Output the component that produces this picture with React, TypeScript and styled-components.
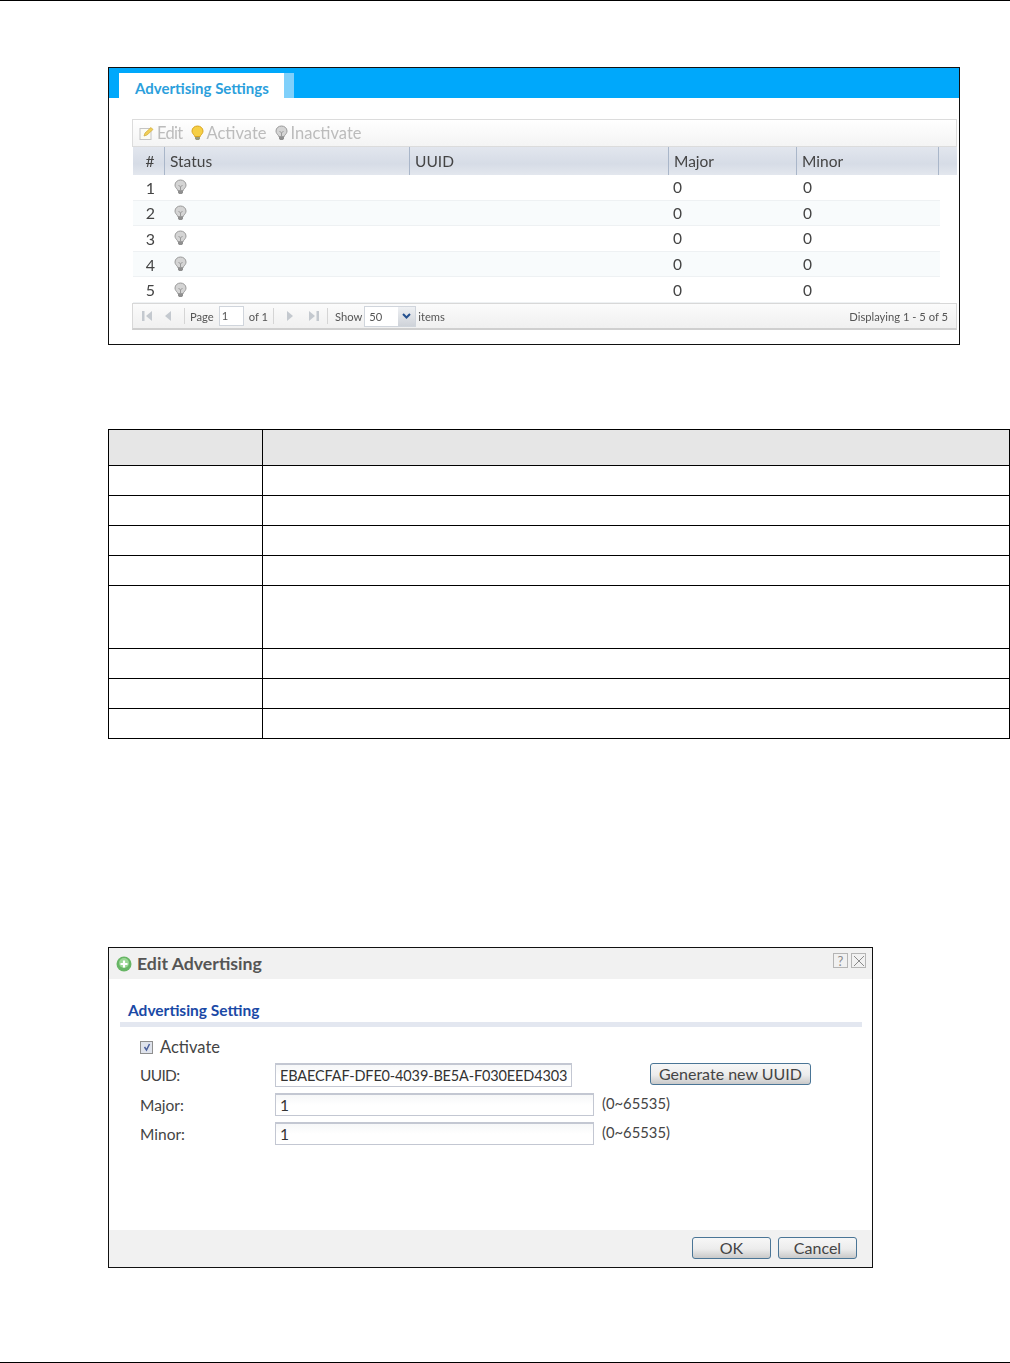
import React from "react";
import styled, { createGlobalStyle } from "styled-components";

const GlobalStyle = createGlobalStyle`
  html, body { margin: 0; padding: 0; background: #fff; }
  body { font-family: "Lato", "Liberation Sans", sans-serif; color: #444; }
`;

// shared template for the five table columns
const columns = "32px 245px 259px 128px 142px 17px";

const descriptionRows = [30, 30, 30, 30, 63, 30, 30, 30];

function Bulb({ on }: { on?: boolean }) {
  const fill = on ? "#f6cf45" : "#d4d4d4";
  const stroke = on ? "#d9a520" : "#9a9a9a";
  return (
    <svg width="13" height="16" viewBox="0 0 13 16">
      <path
        d="M6.5 1C3.4 1 1 3.2 1 6c0 1.9 1.1 3 2 4 .5.6.7 1 .7 1.5h5.6c0-.5.2-.9.7-1.5.9-1 2-2.1 2-4 0-2.8-2.4-5-5.5-5z"
        fill={fill}
        stroke={stroke}
      />
      <path d="M4 12h5v1.5l-1 1.5H5l-1-1.5z" fill={on ? "#9b9b7a" : "#8f8f8f"} />
      {!on && <path d="M4.5 6l2 2 2-2M6.5 8v3" fill="none" stroke="#9a9a9a" />}
    </svg>
  );
}

function EditIcon() {
  return (
    <svg width="15" height="15" viewBox="0 0 15 15">
      <rect x="1" y="2.5" width="11" height="11" fill="#fbfbf4" stroke="#c4c4c4" />
      <path d="M5 10l1-3 6-5.5 2 2L8 9z" fill="#f2cf55" stroke="#cda93a" strokeWidth=".7" />
    </svg>
  );
}

function PagerIcon({ kind }: { kind: "first" | "prev" | "next" | "last" }) {
  const shapes = {
    first: (
      <>
        <rect x="1" y="2" width="2.5" height="10" fill="#c4c9cf" />
        <path d="M11 2v10L5 7z" fill="#c4c9cf" />
      </>
    ),
    prev: <path d="M8 2v10L2 7z" fill="#c4c9cf" />,
    next: <path d="M2 2v10l6-5z" fill="#c4c9cf" />,
    last: (
      <>
        <path d="M1 2v10l6-5z" fill="#c4c9cf" />
        <rect x="8.5" y="2" width="2.5" height="10" fill="#c4c9cf" />
      </>
    ),
  };
  const width = kind === "first" || kind === "last" ? 12 : 9;
  return (
    <svg width={width} height="14" viewBox={`0 0 ${width} 14`}>
      {shapes[kind]}
    </svg>
  );
}

export default function App() {
  const rows = [1, 2, 3, 4, 5];
  return (
    <Page>
      <GlobalStyle />
      <SettingsPanel>
        <TabBand>
          <Tab>Advertising Settings</Tab>
          <TabEdge />
        </TabBand>
        <GridBox>
          <Toolbar>
            <ToolItem $spacing={-0.7}>
              <EditIcon />
              Edit
            </ToolItem>
            <ToolItem>
              <Bulb on />
              Activate
            </ToolItem>
            <ToolItem>
              <Bulb />
              Inactivate
            </ToolItem>
          </Toolbar>
          <HeaderRow>
            <HeaderCell $center>#</HeaderCell>
            <HeaderCell>Status</HeaderCell>
            <HeaderCell>UUID</HeaderCell>
            <HeaderCell>Major</HeaderCell>
            <HeaderCell>Minor</HeaderCell>
            <span />
          </HeaderRow>
          {rows.map((n) => (
            <DataRow key={n} $striped={n % 2 === 0}>
              <NumberCell>{n}</NumberCell>
              <BulbCell>
                <Bulb />
              </BulbCell>
              <span />
              <ValueCell $pad={4}>0</ValueCell>
              <ValueCell $pad={6}>0</ValueCell>
            </DataRow>
          ))}
          <Pager>
            <PagerLeft>
              <PagerButton $width={20}>
                <PagerIcon kind="first" />
              </PagerButton>
              <PagerButton $width={14}>
                <PagerIcon kind="prev" />
              </PagerButton>
              <PagerSep $left={7} />
              <span>Page</span>
              <PageInput>1</PageInput>
              <span>of 1</span>
              <PagerSep />
              <PagerButton $width={15}>
                <PagerIcon kind="next" />
              </PagerButton>
              <PagerButton $width={21}>
                <PagerIcon kind="last" />
              </PagerButton>
              <PagerSep $left={2} $right={2} />
              <span>Show</span>
              <SizeSelect>
                <SizeValue>50</SizeValue>
                <SizeArrow>
                  <svg width="9" height="6" viewBox="0 0 9 6">
                    <path d="M1 1l3.5 3.5L8 1" fill="none" stroke="#24508f" strokeWidth="2" />
                  </svg>
                </SizeArrow>
              </SizeSelect>
              <ItemsLabel>items</ItemsLabel>
            </PagerLeft>
            <span>Displaying 1 - 5 of 5</span>
          </Pager>
        </GridBox>
      </SettingsPanel>

      <DescriptionTable>
        <DescriptionHead />
        {descriptionRows.map((height, i) => (
          <DescriptionRow key={i} $height={height} />
        ))}
      </DescriptionTable>

      <Dialog>
        <DialogTitle>
          <TitleGroup>
            <svg width="16" height="16" viewBox="0 0 16 16">
              <circle cx="8" cy="8" r="7.5" fill="#67b565" />
              <circle cx="8" cy="7" r="5" fill="#9ad795" />
              <path d="M8 4.5v7M4.5 8h7" stroke="#fff" strokeWidth="2.2" />
            </svg>
            Edit Advertising
          </TitleGroup>
          <TitleButtons>
            <TitleButton>?</TitleButton>
            <TitleButton>
              <svg width="12" height="12" viewBox="0 0 12 12">
                <path d="M1 1l10 10M11 1L1 11" stroke="#8a8a8a" />
              </svg>
            </TitleButton>
          </TitleButtons>
        </DialogTitle>
        <DialogBody>
          <SectionTitle>Advertising Setting</SectionTitle>
          <SectionBar />
          <CheckRow>
            <CheckBox>
              <svg width="10" height="10" viewBox="0 0 10 10">
                <path d="M2.5 5l2 3 3-6" fill="none" stroke="#4a5f9c" strokeWidth="1.5" />
              </svg>
            </CheckBox>
            Activate
          </CheckRow>
          <FormRow $height={24} $top={6}>
            <FormLabel $spacing={-0.7}>UUID:</FormLabel>
            <UuidField $width={297} $height={24}>
              EBAECFAF-DFE0-4039-BE5A-F030EED4303
            </UuidField>
            <GenerateButton>Generate new UUID</GenerateButton>
          </FormRow>
          <FormRow $height={23} $top={6}>
            <FormLabel>Major:</FormLabel>
            <TextField $width={319} $height={23}>1</TextField>
            <RangeHint>(0~65535)</RangeHint>
          </FormRow>
          <FormRow $height={23} $top={6}>
            <FormLabel>Minor:</FormLabel>
            <TextField $width={319} $height={23}>1</TextField>
            <RangeHint>(0~65535)</RangeHint>
          </FormRow>
        </DialogBody>
        <DialogFooter>
          <FooterButton>OK</FooterButton>
          <FooterButton>Cancel</FooterButton>
        </DialogFooter>
      </Dialog>
      <BottomRule />
    </Page>
  );
}

const Page = styled.div`
  width: 1010px;
  height: 1363px;
  box-sizing: border-box;
  border-top: 1px solid #000;
  padding-left: 108px;
  display: flex;
  flex-direction: column;
  overflow: hidden;
`;

const SettingsPanel = styled.section`
  width: 852px;
  height: 278px;
  box-sizing: border-box;
  margin-top: 66px;
  border: 1px solid #111;
  filter: blur(0.35px);
`;

const TabBand = styled.div`
  height: 30px;
  background: #00a8fb;
  display: flex;
  align-items: flex-start;
  padding: 5px 0 0 10px;
  box-sizing: border-box;
`;

const Tab = styled.div`
  width: 165px;
  height: 26px;
  background: #fff;
  box-sizing: border-box;
  padding-left: 16px;
  font-size: 15px;
  font-weight: 700;
  line-height: 30px;
  color: #2c9fdc;
  white-space: nowrap;
`;

const TabEdge = styled.div`
  width: 10px;
  height: 25px;
  background: #7fd0fb;
`;

const GridBox = styled.div`
  margin: 21px 2px 0 23px;
`;

const Toolbar = styled.div`
  height: 28px;
  box-sizing: border-box;
  border: 1px solid #dcdcdc;
  background: linear-gradient(#fff, #f4f4f4);
  display: flex;
  align-items: center;
  gap: 8px;
  padding-left: 6px;
`;

const ToolItem = styled.span<{ $spacing?: number }>`
  display: flex;
  align-items: center;
  gap: 3px;
  font-size: 16.5px;
  color: #bcbcbc;
  letter-spacing: ${({ $spacing }) => $spacing ?? 0}px;
`;

const HeaderRow = styled.div`
  display: grid;
  grid-template-columns: ${columns};
  height: 28px;
  margin-left: 1px;
  background: linear-gradient(#e2e6ee, #d6dce6 60%, #e3e7ee);
`;

const HeaderCell = styled.div<{ $center?: boolean }>`
  border-right: 1px solid #a9b6c9;
  font-size: 15.5px;
  line-height: 28px;
  color: #444;
  padding-left: ${({ $center }) => ($center ? "3px" : "5px")};
  text-align: ${({ $center }) => ($center ? "center" : "left")};
`;

const DataRow = styled.div<{ $striped: boolean }>`
  display: grid;
  grid-template-columns: ${columns};
  height: 25.6px;
  box-sizing: border-box;
  margin: 0 17px 0 1px;
  border-bottom: 1px solid #eef1f3;
  background: ${({ $striped }) => ($striped ? "#f8fbfc" : "#fff")};
  align-items: center;
`;

const NumberCell = styled.div`
  text-align: center;
  padding-left: 3px;
  font-size: 16px;
  color: #444;
`;

const BulbCell = styled.div`
  display: flex;
  padding-left: 9px;
`;

const ValueCell = styled.div<{ $pad: number }>`
  padding-left: ${({ $pad }) => $pad}px;
  font-size: 15.5px;
  color: #444;
`;

const Pager = styled.div`
  height: 27px;
  box-sizing: border-box;
  border: 1px solid #d8d8d8;
  border-bottom: 2px solid #cfcfcf;
  background: linear-gradient(#fbfbfb, #f0f0f0);
  display: flex;
  align-items: center;
  justify-content: space-between;
  padding: 1px 8px 0 0;
  font-size: 11.2px;
  color: #555;
`;

const PagerLeft = styled.div`
  display: flex;
  align-items: center;
  gap: 5px;
`;

const PagerButton = styled.span<{ $width: number }>`
  width: ${({ $width }) => $width}px;
  display: flex;
  justify-content: flex-end;
`;

const PagerSep = styled.span<{ $left?: number; $right?: number }>`
  width: 1px;
  height: 16px;
  background: #d5d5d5;
  margin: 0 ${({ $right }) => $right ?? 0}px 0 ${({ $left }) => $left ?? 0}px;
`;

const PageInput = styled.span`
  width: 25px;
  height: 20px;
  box-sizing: border-box;
  border: 1px solid #d0d5dc;
  background: #fff;
  padding-left: 2px;
  line-height: 18px;
`;

const SizeSelect = styled.span`
  display: flex;
  width: 52px;
  height: 21px;
  box-sizing: border-box;
  border: 1px solid #d0d5dc;
  background: #fff;
  margin-left: -3px;
`;

const SizeValue = styled.span`
  flex: 1;
  padding-left: 4px;
  line-height: 19px;
`;

const SizeArrow = styled.span`
  width: 17px;
  background: linear-gradient(#eef0f3, #cfd3d9);
  display: flex;
  align-items: center;
  justify-content: center;
`;

const ItemsLabel = styled.span`
  margin-left: -3px;
`;

const DescriptionTable = styled.div`
  width: 902px;
  margin-top: 84px;
  box-sizing: border-box;
  border: 1px solid #000;
  display: flex;
  flex-direction: column;
`;

const DescriptionHead = styled.div`
  height: 35px;
  box-sizing: border-box;
  background: linear-gradient(to right, transparent 153px, #000 153px, #000 154px, transparent 154px), #e6e6e6;
`;

const DescriptionRow = styled.div<{ $height: number }>`
  height: ${({ $height }) => $height}px;
  box-sizing: border-box;
  border-top: 1px solid #000;
  background: linear-gradient(to right, transparent 153px, #000 153px, #000 154px, transparent 154px);
`;

const Dialog = styled.section`
  width: 765px;
  height: 321px;
  margin-top: 208px;
  box-sizing: border-box;
  border: 1px solid #111;
  display: flex;
  flex-direction: column;
`;

const DialogTitle = styled.header`
  height: 31px;
  background: #f1f1f1;
  display: flex;
  align-items: center;
  justify-content: space-between;
  padding: 0 6px 0 7px;
`;

const TitleGroup = styled.div`
  display: flex;
  align-items: center;
  gap: 5px;
  font-size: 17.7px;
  font-weight: 700;
  color: #555;
`;

const TitleButtons = styled.div`
  display: flex;
  gap: 3px;
  margin-top: -6px;
`;

const TitleButton = styled.span`
  width: 15px;
  height: 15px;
  box-sizing: border-box;
  border: 1px solid #b5b5b5;
  display: flex;
  align-items: center;
  justify-content: center;
  font-size: 13px;
  color: #8a8a8a;
`;

const DialogBody = styled.div`
  flex: 1;
  padding: 22px 10px 0 11px;
`;

const SectionTitle = styled.h2`
  margin: 0 0 0 8px;
  font-size: 15.5px;
  line-height: 18px;
  font-weight: 700;
  color: #1a49a6;
`;

const SectionBar = styled.div`
  height: 5px;
  margin-top: 3px;
  background: #e3e7f0;
`;

const CheckRow = styled.div`
  display: flex;
  align-items: center;
  gap: 7px;
  height: 20px;
  margin: 10px 0 0 20px;
  font-size: 16.5px;
  color: #444;
`;

const CheckBox = styled.span`
  width: 13px;
  height: 13px;
  box-sizing: border-box;
  border: 1px solid #8f8f8f;
  background: #dfe3ec;
  display: flex;
  align-items: center;
  justify-content: center;
`;

const FormRow = styled.div<{ $height: number; $top: number }>`
  display: flex;
  align-items: center;
  height: ${({ $height }) => $height}px;
  margin: ${({ $top }) => $top}px 0 0 20px;
`;

const FormLabel = styled.label<{ $spacing?: number }>`
  width: 135px;
  font-size: 15.5px;
  color: #444;
  letter-spacing: ${({ $spacing }) => $spacing ?? 0}px;
`;

const TextField = styled.div<{ $width: number; $height: number }>`
  width: ${({ $width }) => $width}px;
  height: ${({ $height }) => $height}px;
  box-sizing: border-box;
  border: 1px solid #c3c7d2;
  border-top-width: 2px;
  background: linear-gradient(#f6f7f8, #fff 50%);
  padding-left: 4px;
  font-size: 15.5px;
  line-height: 21px;
  color: #333;
  white-space: nowrap;
`;

const UuidField = styled(TextField)`
  font-size: 14.5px;
  letter-spacing: -0.15px;
`;

const ActionButton = styled.button`
  box-sizing: border-box;
  border: 1px solid #4a7596;
  border-radius: 3px;
  background: linear-gradient(#f7f7f7, #ececec 55%, #c9c9c9);
  font-family: inherit;
  font-size: 16px;
  color: #444;
  padding: 0;
`;

const GenerateButton = styled(ActionButton)`
  width: 161px;
  height: 22px;
  margin: -3px 0 0 78px;
  line-height: 18px;
`;

const RangeHint = styled.span`
  margin: -3px 0 0 8px;
  font-size: 14.8px;
  color: #444;
`;

const DialogFooter = styled.footer`
  height: 37px;
  background: #f1f1f1;
  display: flex;
  align-items: center;
  justify-content: flex-end;
  gap: 7px;
  padding: 0 15px 1px 0;
  box-sizing: border-box;
`;

const FooterButton = styled(ActionButton)`
  width: 79px;
  height: 22px;
  line-height: 18px;
`;

const BottomRule = styled.div`
  height: 1px;
  margin: auto 0 0 -108px;
  width: 1010px;
  background: #000;
`;
